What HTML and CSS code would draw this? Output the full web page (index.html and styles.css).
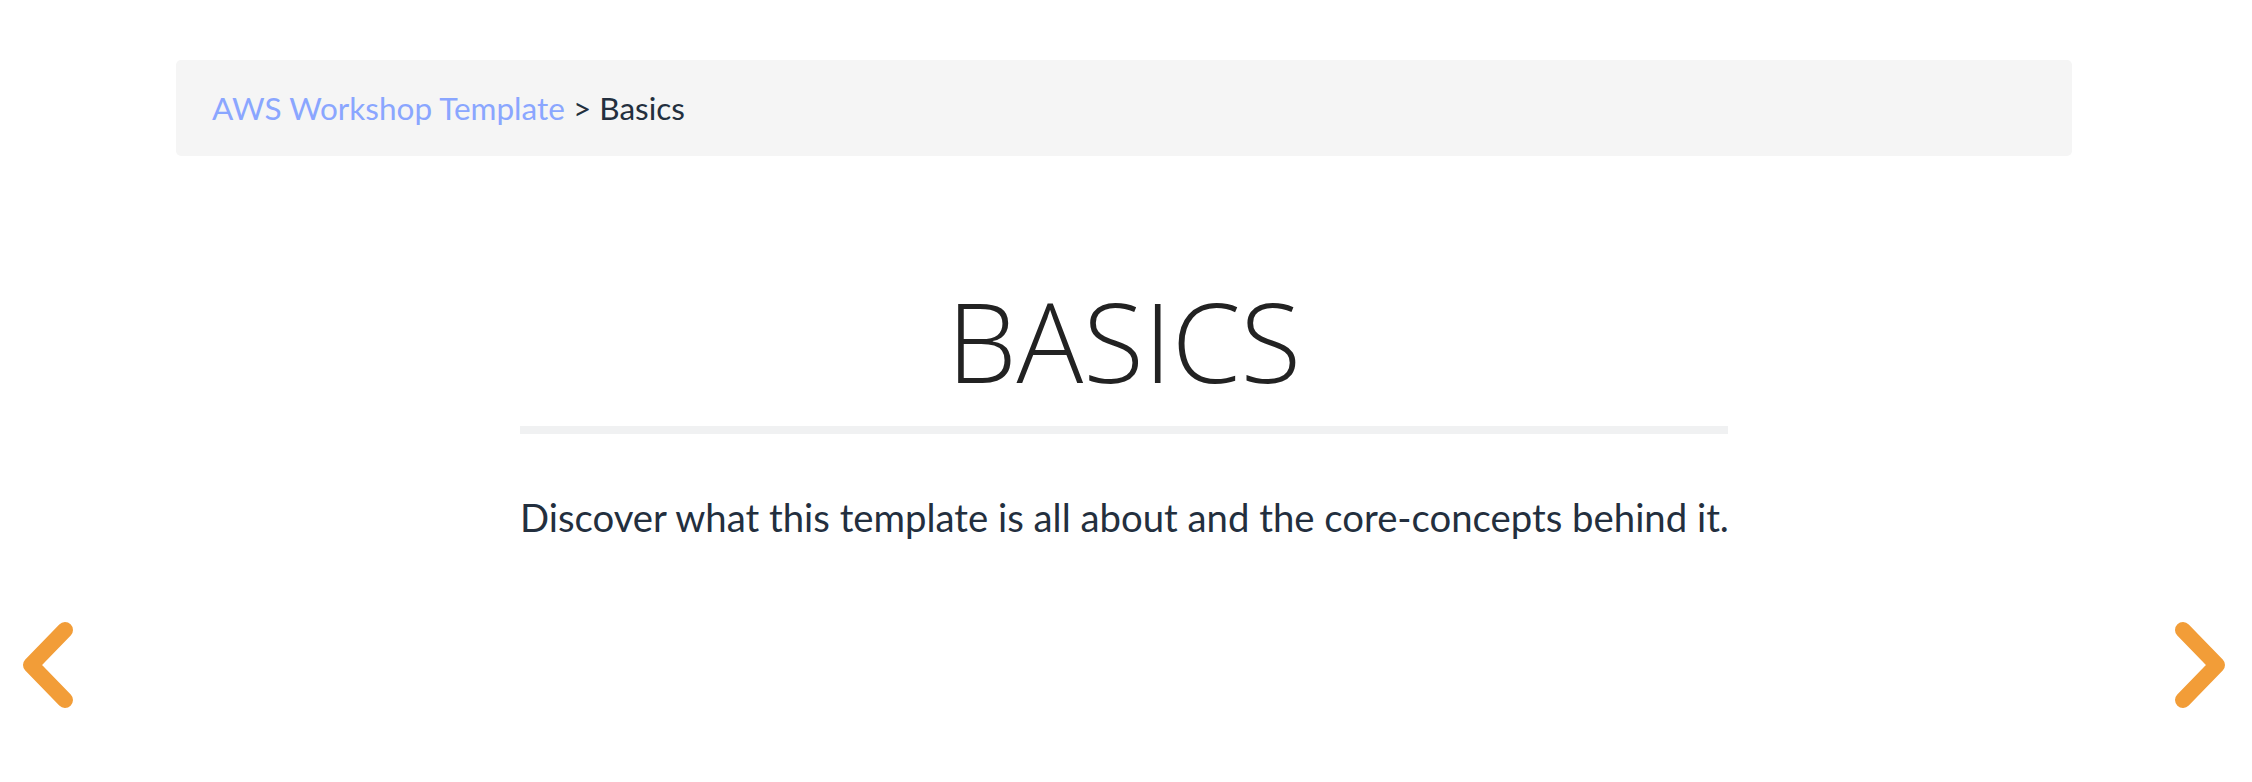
FILE: index.html
```html
<!DOCTYPE html>
<html lang="en">
<head>
<meta charset="utf-8">
<title>Basics</title>
<link rel="stylesheet" href="styles.css">
</head>
<body>
<div class="page">
  <nav class="breadcrumb">
    <a class="crumb-link" href="#">AWS Workshop Template</a><span class="crumb-sep"> &gt; </span><span class="crumb-current">Basics</span>
  </nav>
  <main class="chapter">
    <h1 class="chapter-title">BASICS</h1>
    <hr class="chapter-rule">
    <p class="chapter-desc">Discover what this template is all about and the core-concepts behind it.</p>
  </main>
</div>
<a class="nav-arrow nav-prev" href="#" aria-label="Previous">
  <svg width="60" height="100" viewBox="0 0 60 100"><polyline points="43,15 9,50 43,85" fill="none" stroke="#f29d38" stroke-width="16" stroke-linecap="round" stroke-linejoin="round"/></svg>
</a>
<a class="nav-arrow nav-next" href="#" aria-label="Next">
  <svg width="60" height="100" viewBox="0 0 60 100"><polyline points="17,15 51,50 17,85" fill="none" stroke="#f29d38" stroke-width="16" stroke-linecap="round" stroke-linejoin="round"/></svg>
</a>
</body>
</html>
```
FILE: styles.css
```css
html, body {
  margin: 0;
  padding: 0;
  background: #ffffff;
}
body {
  font-family: "Open Sans", "Liberation Sans", sans-serif;
  position: relative;
  min-height: 782px;
}
.page {
  padding: 60px 180px 0 176px;
}
.breadcrumb {
  background: #f5f5f5;
  border-radius: 5px;
  height: 96px;
  display: flex;
  align-items: center;
  padding: 0 36px;
  font-family: "Lato", "Open Sans", sans-serif;
  font-size: 31.5px;
  color: #232f3e;
  white-space: pre;
}
.crumb-link {
  color: #8aa6ff;
  text-decoration: none;
}
.chapter {
  width: 1208px;
  margin: 0 auto;
}
.chapter-title {
  margin: 0;
  padding-top: 124px;
  text-align: center;
  font-weight: 300;
  font-size: 111px;
  line-height: 120px;
  color: #222222;
}
.chapter-rule {
  border: 0;
  height: 8px;
  background: #f0f1f2;
  margin: 26px 0 0;
}
.chapter-desc {
  margin: 58px 0 0;
  font-family: "Lato", "Open Sans", sans-serif;
  font-size: 38.3px;
  line-height: 50px;
  color: #232f3e;
  white-space: nowrap;
}
.nav-arrow {
  position: absolute;
  top: 615px;
  display: block;
  line-height: 0;
}
.nav-prev { left: 22px; }
.nav-next { right: 26px; }
```
